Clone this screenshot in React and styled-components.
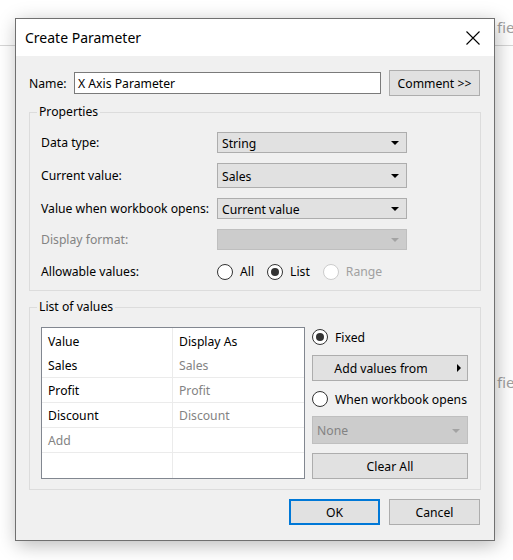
import styled, { createGlobalStyle } from "styled-components";

const GlobalStyle = createGlobalStyle`
	html, body {
		margin: 0;
		padding: 0;
		background: #fff;
	}
	body {
		font-family: "Noto Sans", "Open Sans", sans-serif;
		font-size: 12.2px;
		color: #000;
	}
`;

const values = ["Sales", "Profit", "Discount"];

const App = () => {
	return (
		<Page>
			<GlobalStyle />
			<Backdrop>
				<TopStrip>
					<Faded>fie</Faded>
				</TopStrip>
				<MidRow>
					<Faded>fie</Faded>
				</MidRow>
			</Backdrop>

			<Dialog>
				<TitleBar>
					<Title>Create Parameter</Title>
					<svg width="14" height="14" viewBox="0 0 14 14">
						<path d="M0.5 0.5 L13.5 13.5 M13.5 0.5 L0.5 13.5" stroke="#000" strokeWidth="1.1" fill="none" />
					</svg>
				</TitleBar>

				<Body>
					<NameRow>
						<NameLabel>Name:</NameLabel>
						<TextInput>X Axis Parameter</TextInput>
						<Button $width={91}>Comment &gt;&gt;</Button>
					</NameRow>

					<Group>
						<Legend>Properties</Legend>
						<PropGrid>
							<FieldLabel>Data type:</FieldLabel>
							<Select>
								<span>String</span>
								<Arrow />
							</Select>

							<FieldLabel>Current value:</FieldLabel>
							<Select $tall>
								<span>Sales</span>
								<Arrow />
							</Select>

							<FieldLabel>Value when workbook opens:</FieldLabel>
							<Select>
								<span>Current value</span>
								<Arrow />
							</Select>

							<FieldLabel $disabled>Display format:</FieldLabel>
							<Select $disabled>
								<span />
								<Arrow $disabled />
							</Select>

							<FieldLabel $mt={3}>Allowable values:</FieldLabel>
							<RadioSet>
								<Radio>
									<Circle />
									<span>All</span>
								</Radio>
								<Radio>
									<Circle $checked />
									<span>List</span>
								</Radio>
								<Radio $disabled>
									<Circle $disabled />
									<span>Range</span>
								</Radio>
							</RadioSet>
						</PropGrid>
					</Group>

					<Group>
						<Legend>List of values</Legend>
						<ListArea>
							<Table>
								<Cell $first>Value</Cell>
								<Cell>Display As</Cell>
								{values.map(v => (
									<Row key={v}>
										<Cell $first $line>{v}</Cell>
										<Cell $line $gray>{v}</Cell>
									</Row>
								))}
								<Cell $first $line $gray>Add</Cell>
								<Cell $line />
								<Cell $first />
								<Cell />
							</Table>

							<Side>
								<Radio $height={20}>
									<Circle $checked />
									<span>Fixed</span>
								</Radio>
								<Button $mt={8}>
									<BtnText>Add values from</BtnText>
									<RightArrow />
								</Button>
								<Radio $height={20} $mt={8}>
									<Circle />
									<span>When workbook opens</span>
								</Radio>
								<Select $disabled $h={28} $mt={7}>
									<FieldLabel $disabled>None</FieldLabel>
									<Arrow $disabled />
								</Select>
								<Button $mt={9}>Clear All</Button>
							</Side>
						</ListArea>
					</Group>

					<Footer>
						<Button $width={91} $primary>OK</Button>
						<Button $width={91}>Cancel</Button>
					</Footer>
				</Body>
			</Dialog>
		</Page>
	);
};
export default App;

const Page = styled.div`
	position: relative;
	width: 513px;
	height: 560px;
	overflow: hidden;
`;

const Backdrop = styled.div`
	display: flex;
	flex-direction: column;
`;

const TopStrip = styled.div`
	height: 46px;
	box-sizing: border-box;
	border-bottom: 1px solid #d6d6d6;
	padding: 17px 0 0 497px;
`;

const MidRow = styled.div`
	padding: 326px 0 0 497px;
`;

const Faded = styled.span`
	font-size: 15px;
	color: #a0a0a0;
`;

const Dialog = styled.div`
	position: absolute;
	left: 15px;
	top: 18px;
	width: 480px;
	height: 523px;
	box-sizing: border-box;
	border: 1px solid #707070;
	background: #f0f0f0;
	display: flex;
	flex-direction: column;
	box-shadow: 2px 4px 18px rgba(0, 0, 0, 0.28);
`;

const TitleBar = styled.div`
	height: 37px;
	flex-shrink: 0;
	background: #fff;
	display: flex;
	align-items: center;
	justify-content: space-between;
	padding: 0 14px 0 9px;
`;

const Title = styled.span`
	font-size: 14px;
`;

const Body = styled.div`
	flex: 1;
	display: flex;
	flex-direction: column;
	padding: 14px 13px 14px 13px;
`;

const NameRow = styled.div`
	display: flex;
	align-items: center;
	height: 26px;
`;

const NameLabel = styled.span`
	width: 45px;
`;

const TextInput = styled.div`
	width: 307px;
	height: 22px;
	box-sizing: border-box;
	border: 1px solid #7a7a7a;
	background: #fff;
	padding: 0 3px;
	display: flex;
	align-items: center;
	margin-right: 8px;
`;

const Button = styled.div`
	width: ${p => (p.$width ? `${p.$width}px` : "auto")};
	height: 26px;
	margin-top: ${p => p.$mt || 0}px;
	box-sizing: border-box;
	border: ${p => (p.$primary ? "2px solid #0078d7" : "1px solid #adadad")};
	background: #e1e1e1;
	display: flex;
	align-items: center;
	justify-content: center;
`;

const BtnText = styled.span`
	flex: 1;
	text-align: center;
`;

const RightArrow = styled.span`
	width: 18px;
	display: flex;
	justify-content: center;

	&::before {
		content: "";
		border-left: 4px solid #000;
		border-top: 4px solid transparent;
		border-bottom: 4px solid transparent;
		margin-left: 1px;
	}
`;

const Group = styled.fieldset`
	margin: 8px 0 0 0;
	padding: 12px 11px 10px 11px;
	border: 1px solid #dcdcdc;
	min-width: 0;
`;

const Legend = styled.legend`
	padding: 0 2px;
	margin-left: -4px;
	line-height: 16px;
`;

const PropGrid = styled.div`
	display: grid;
	grid-template-columns: 176px 190px;
	row-gap: 10px;
	align-items: center;
`;

const FieldLabel = styled.span`
	color: ${p => (p.$disabled ? "#838383" : "#000")};
	margin-top: ${p => p.$mt || 0}px;
	line-height: 17px;
`;

const Select = styled.div`
	height: ${p => (p.$h ? p.$h : p.$tall ? 25 : 21)}px;
	margin-top: ${p => p.$mt || 0}px;
	box-sizing: border-box;
	border: 1px solid ${p => (p.$disabled ? "#bfbfbf" : "#adadad")};
	background: ${p => (p.$disabled ? "#cccccc" : "#e1e1e1")};
	display: flex;
	align-items: center;
	justify-content: space-between;
	padding: 1px 7px 0 4px;
`;

const Arrow = styled.span`
	width: 0;
	height: 0;
	border-top: 4px solid ${p => (p.$disabled ? "#a3a3a3" : "#000")};
	border-left: 4px solid transparent;
	border-right: 4px solid transparent;
`;

const RadioSet = styled.div`
	display: flex;
	align-items: center;
	gap: 13px;
	margin-top: 3px;
`;

const Radio = styled.label`
	display: flex;
	align-items: center;
	gap: 7px;
	height: ${p => (p.$height ? `${p.$height}px` : "16px")};
	margin-top: ${p => p.$mt || 0}px;
	color: ${p => (p.$disabled ? "#a0a0a0" : "#000")};
`;

const Circle = styled.span`
	width: 16px;
	height: 16px;
	box-sizing: border-box;
	border-radius: 50%;
	border: 1px solid ${p => (p.$disabled ? "#cccccc" : "#333")};
	background: #fff;
	display: flex;
	align-items: center;
	justify-content: center;

	&::after {
		content: "";
		display: ${p => (p.$checked ? "block" : "none")};
		width: 8px;
		height: 8px;
		border-radius: 50%;
		background: #333;
	}
`;

const ListArea = styled.div`
	display: flex;
	gap: 7px;
`;

const Table = styled.div`
	width: 264px;
	height: 152px;
	box-sizing: border-box;
	border: 1px solid #828790;
	background: #fff;
	display: grid;
	grid-template-columns: 131px 131px;
	grid-auto-rows: 25px;
`;

const Row = styled.div`
	display: contents;
`;

const Cell = styled.div`
	box-sizing: border-box;
	padding: 1px 0 0 6px;
	display: flex;
	align-items: center;
	color: ${p => (p.$gray ? "#838383" : "#000")};
	border-right: ${p => (p.$first ? "1px solid #ebebeb" : "none")};
	border-bottom: ${p => (p.$line ? "1px solid #ebebeb" : "none")};
`;

const Side = styled.div`
	width: 156px;
	display: flex;
	flex-direction: column;
`;

const Footer = styled.div`
	margin-top: 9px;
	display: flex;
	justify-content: flex-end;
	gap: 9px;
	padding-right: 1px;
`;
